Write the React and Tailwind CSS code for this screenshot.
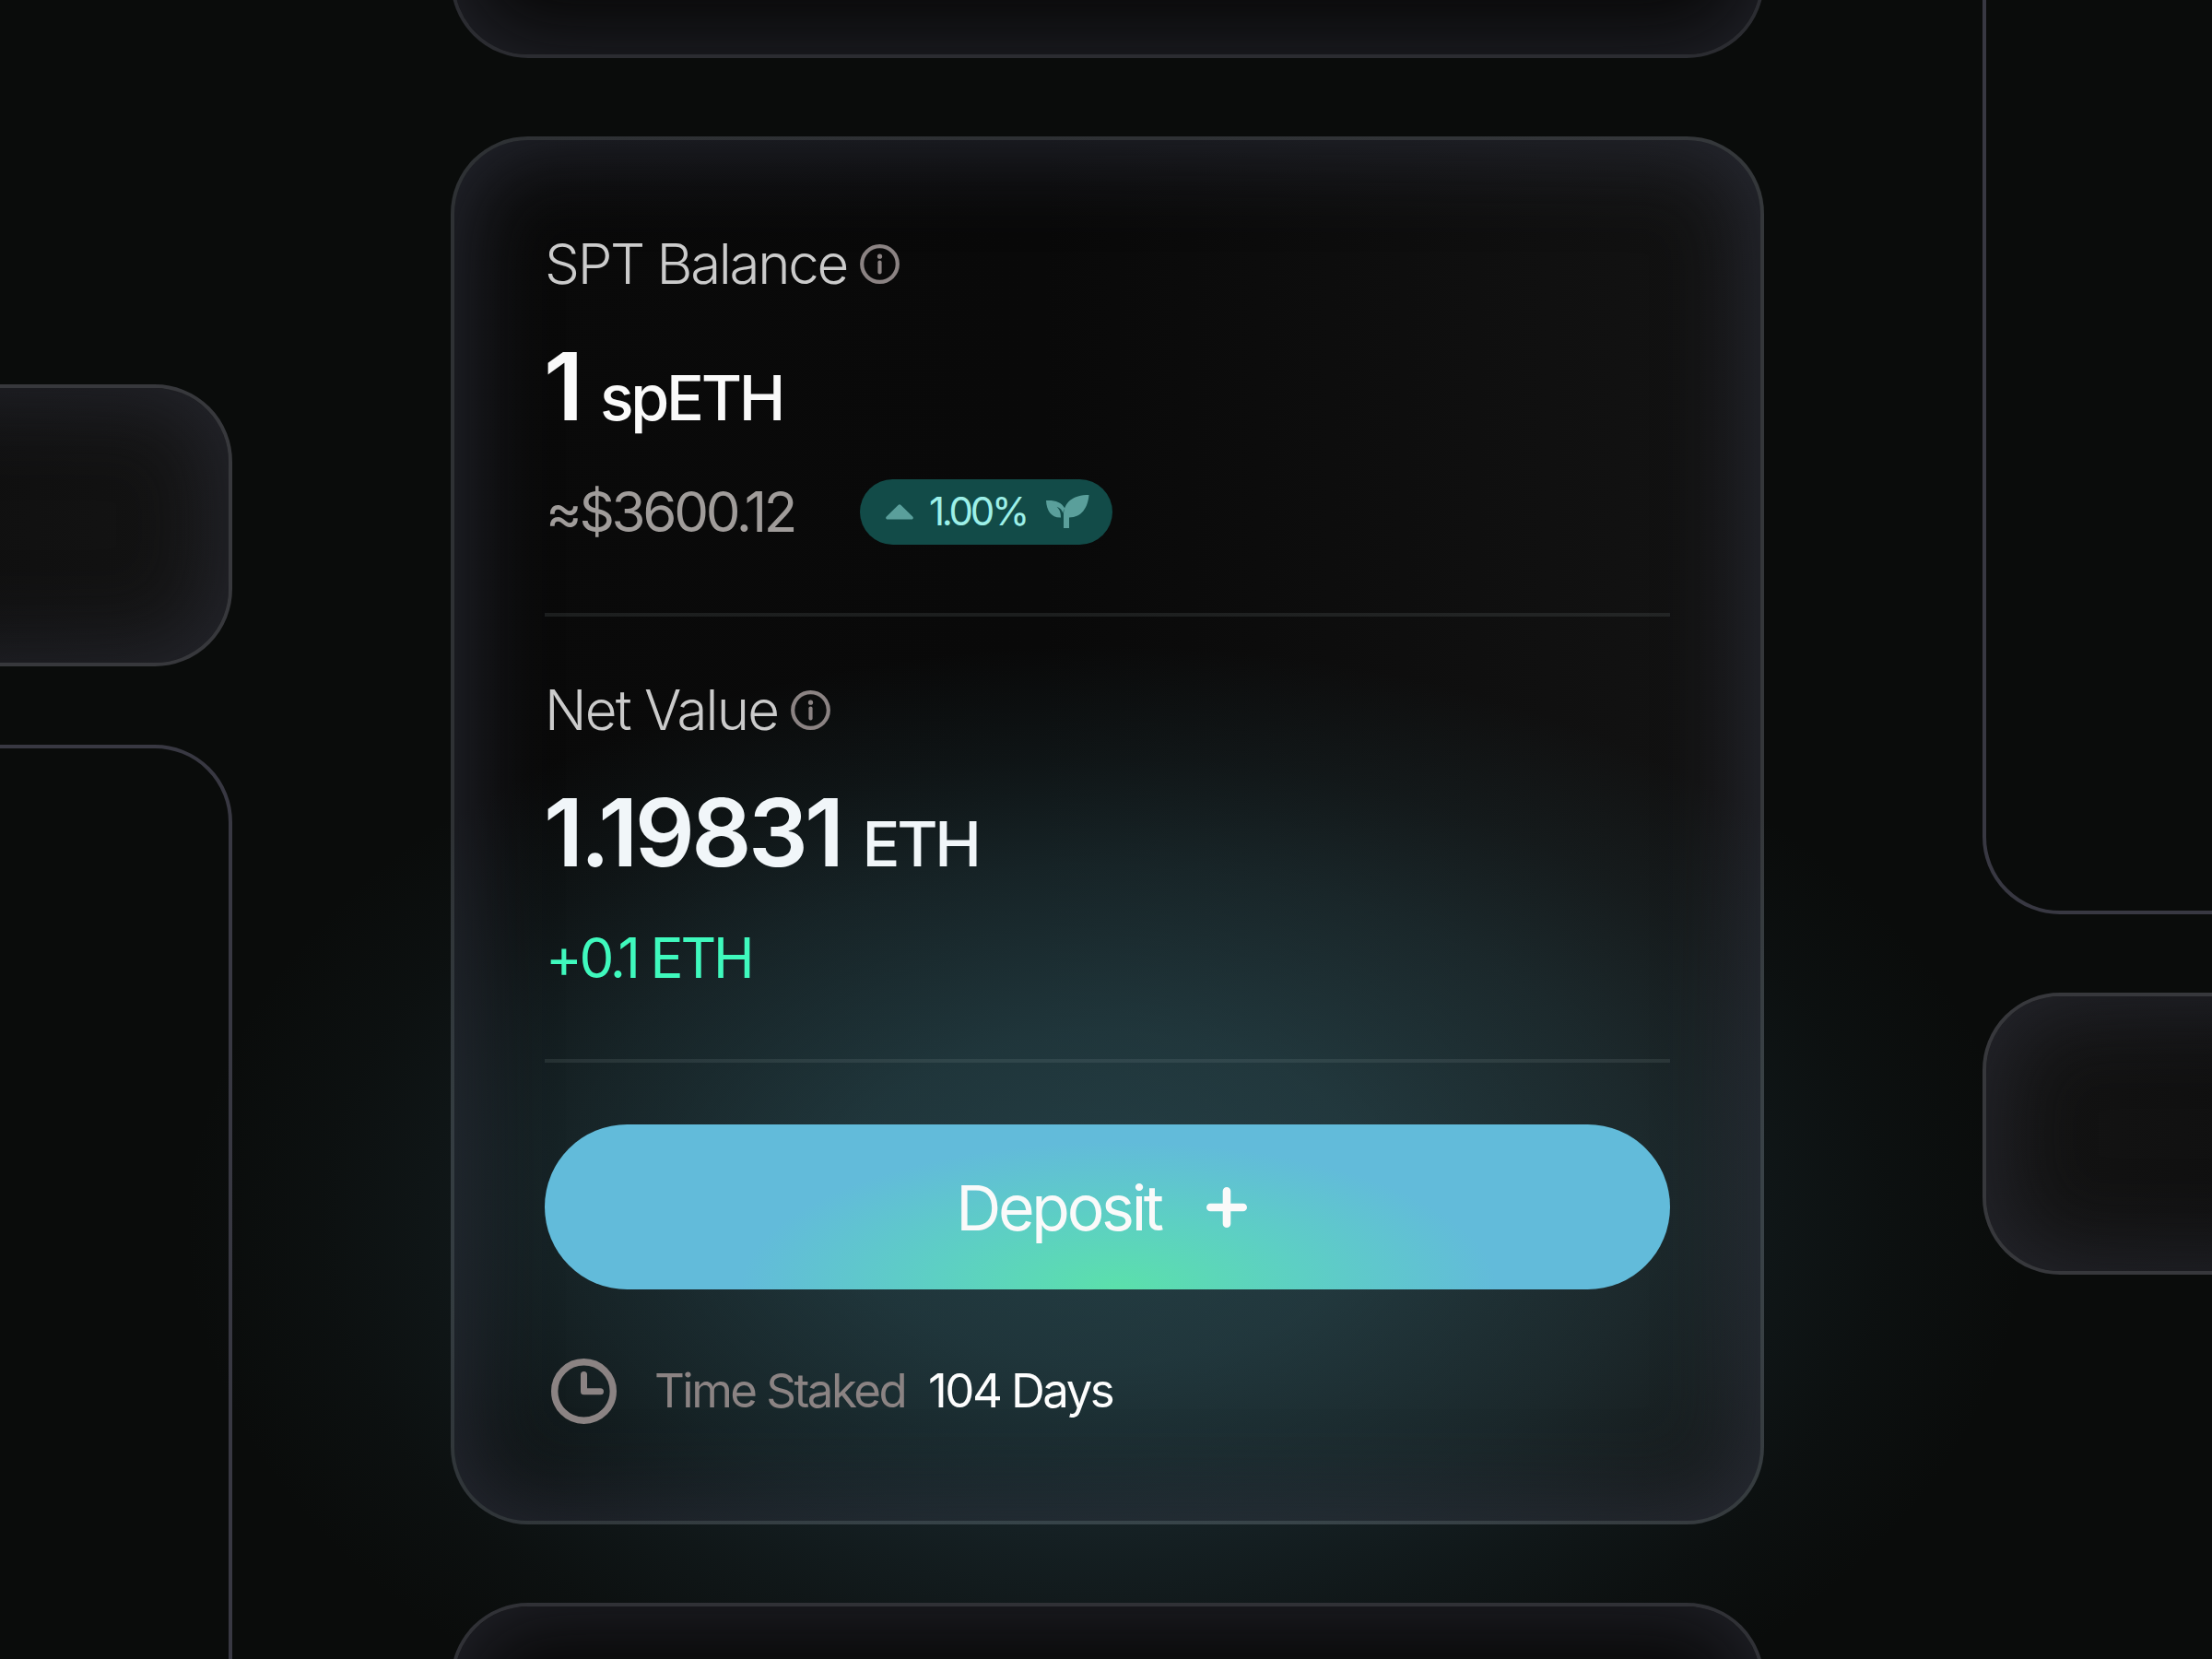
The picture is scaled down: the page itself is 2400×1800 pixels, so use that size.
const FONT = 'font-["Inter",sans-serif]';

// Glassy panel: thin border with a soft cool haze running round the inside
function Panel({ className = '' }) {
  return (
    <div
      className={`shrink-0 rounded-[84px] border-4 shadow-[inset_0_0_90px_14px_rgba(46,49,59,0.62)] ${className}`}
    />
  );
}

function OutlinePanel({ className = '' }) {
  return <div className={`shrink-0 rounded-[84px] border-4 border-[#383842] ${className}`} />;
}

function InfoIcon() {
  return (
    <svg className="size-[43px] shrink-0" viewBox="0 0 43 43" fill="none">
      <circle cx="21.5" cy="21.5" r="19.3" stroke="#8b8383" strokeWidth="4.2" />
      <circle cx="21.5" cy="13.2" r="2.6" fill="#8b8383" />
      <path d="M21.5 19.5v11" stroke="#8b8383" strokeWidth="4.2" strokeLinecap="round" />
    </svg>
  );
}

function ClockIcon() {
  return (
    <svg className="size-[71px] shrink-0" viewBox="0 0 71 71" fill="none" stroke="#8b8383">
      <circle cx="35.5" cy="35.5" r="31.8" strokeWidth="7.4" />
      <path d="M35.5 17.5v18.3h18" strokeWidth="7" strokeLinecap="round" strokeLinejoin="round" />
    </svg>
  );
}

function LeafIcon() {
  return (
    <svg className="h-[36px] w-[47px] shrink-0" viewBox="0 0 47 36" fill="#5a9f9b">
      <path d="M46.5 0C45.5 13 39 24.5 25 24.5V36H19V22C19 8 29 0 46.5 0Z" />
      <path d="M0 6c9-.6 16.5 1.4 20.3 8.5-1.2 2-1.8 3.5-2 5.5-1-3.5-3-6-6.8-7.300 3.500 3.300 4.500 6.800 4.500 11.800C6 25 .5 17.500 0 6Z" />
    </svg>
  );
}

function Section({ label, labelClass, amount, amountClass, unit, unitClass, children }) {
  return (
    <section className="flex h-[484px] shrink-0 flex-col border-b-4 border-[#a0b4b4]/13 pt-[71px]">
      <div className="flex h-[60px] items-center gap-[14px]">
        <h2 className={`text-[60px] leading-[60px] font-light whitespace-nowrap text-[#cbcbcb] ${labelClass}`}>
          {label}
        </h2>
        <InfoIcon />
      </div>
      <div className="mt-[51px] flex h-[104px] items-baseline whitespace-nowrap">
        <span className={`-ml-px text-[102px] leading-[104px] font-semibold ${amountClass}`}>{amount}</span>
        <span className={`text-[68px] leading-[68px] font-medium tracking-[-0.049em] ${unitClass}`}>{unit}</span>
      </div>
      <div className="mt-[48px] flex h-[72px] items-center">{children}</div>
    </section>
  );
}

function StakeCard() {
  return (
    <article className="flex h-[1506px] shrink-0 flex-col rounded-[84px] border-4 border-[#8c96a0]/28 bg-[radial-gradient(980px_600px_at_50%_76.5%,rgba(60,110,122,0.52)_0%,rgba(60,110,122,0.44)_30%,rgba(60,110,122,0.26)_60%,rgba(60,110,122,0.11)_80%,rgba(60,110,122,0)_100%),linear-gradient(90deg,#0a0a0a_0%,#090909_45%,#131313_100%)] bg-origin-border px-[98px] pt-[33px] shadow-[inset_0_0_90px_13px_rgba(50,54,67,0.65)]">
      <Section
        label="SPT Balance"
        labelClass="tracking-[-0.038em]"
        amount="1"
        amountClass="tracking-[-0.05em] text-[#fafafa]"
        unit="spETH"
        unitClass="ml-[23px] text-[#fafafa]"
      >
        <span className="w-[342px] pl-px text-[60px] leading-[72px] tracking-[-0.055em] whitespace-nowrap text-[#a09c9a]">
          ≈$3600.12
        </span>
        <div className="flex h-[71px] w-[274px] items-center rounded-full bg-[#124b48] pl-[28px]">
          <svg className="h-[17px] w-[30px] shrink-0" viewBox="0 0 30 17" fill="#5a9f9b">
            <path d="M13.8.8a2 2 0 0 1 2.4 0L29.2 13.500c1.300 1.500.5 3-1.200 3H2C.3 16.500-.5 15 .8 13.500Z" />
          </svg>
          <span className="ml-[17px] w-[110px] text-[42px] leading-[48px] tracking-[-0.078em] text-[#9df0e8]">
            1.00%
          </span>
          <span className="ml-[17px] flex">
            <LeafIcon />
          </span>
        </div>
      </Section>

      <Section
        label="Net Value"
        labelClass="tracking-[-0.03em]"
        amount="1.19831"
        amountClass="tracking-[-0.036em] text-[#f1f6f9]"
        unit="ETH"
        unitClass="ml-[23px] text-[#f1f6f9]"
      >
        <span className="pl-px text-[60px] leading-[72px] tracking-[-0.053em] text-[#3ff9bd]">+0.1 ETH</span>
      </Section>

      <button className="mt-[67px] flex h-[179px] shrink-0 items-center justify-center gap-[49px] rounded-full bg-[radial-gradient(410px_160px_at_51%_100%,#5be0ab_0%,#5dcfc4_50%,#62bbda_100%)] pr-[13px] text-[#fafafa]">
        <span className="text-[68px] leading-[72px] tracking-[-0.049em]">Deposit</span>
        <svg className="size-[44px]" viewBox="0 0 44 44" fill="none" stroke="currentColor" strokeWidth="8.6" strokeLinecap="round">
          <path d="M22 4.300v35.400M4.300 22h35.400" />
        </svg>
      </button>

      <div className="mt-[75px] flex items-center pl-[7px] text-[51px] leading-[60px] tracking-[-0.05em] whitespace-nowrap">
        <ClockIcon />
        <span className="ml-[41px] pb-[2px] text-[#8b8383]">Time Staked</span>
        <span className="ml-[25px] pb-[2px] text-[#fdfdfd]">104 Days</span>
      </div>
    </article>
  );
}

export default function App() {
  return (
    <main
      className={`flex h-[1800px] w-[2400px] justify-center gap-[237px] overflow-hidden bg-[#0a0c0b] bg-[radial-gradient(1000px_640px_at_50%_74%,rgba(56,96,112,0.36)_0%,rgba(56,96,112,0.25)_50%,rgba(56,96,112,0.13)_70%,rgba(56,96,112,0.05)_85%,rgba(56,96,112,0)_100%)] pl-[3px] ${FONT}`}
    >
      <div className="flex w-[1425px] shrink-0 flex-col gap-[85px] pt-[417px]">
        <Panel className="h-[306px] border-[#37383c] bg-[linear-gradient(90deg,#0a0a0a_50%,#141414_100%)]" />
        <OutlinePanel className="h-[1200px]" />
      </div>

      <div className="flex w-[1425px] shrink-0 flex-col gap-[85px]">
        <Panel className="-mt-[337px] h-[400px] border-[#2b2c31] bg-[#090909]" />
        <StakeCard />
        <Panel className="h-[400px] border-[#303136] bg-[#090909]" />
      </div>

      <div className="flex w-[1425px] shrink-0 flex-col gap-[85px]">
        <OutlinePanel className="-mt-[200px] h-[1192px]" />
        <Panel className="h-[306px] border-[#37383c] bg-[linear-gradient(90deg,#141414_0%,#0a0a0a_50%)]" />
      </div>
    </main>
  );
}
